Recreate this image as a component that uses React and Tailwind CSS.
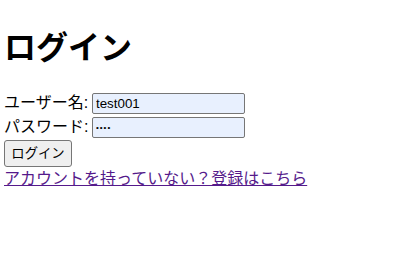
import React from 'react';

const App = () => {
  return (
    <div className="min-h-[280px] bg-white px-1 text-black font-['Liberation_Sans','Noto_Sans_CJK_JP',sans-serif]">
      <h1 className="pt-[30px] pb-[24px] text-[32px] leading-[37px] font-bold">ログイン</h1>

      <form className="flex flex-col items-start" onSubmit={(e) => e.preventDefault()}>
        <div className="flex items-center h-[24px]">
          <label className="w-[88px] text-[16px] leading-[24px] whitespace-nowrap">ユーザー名:</label>
          <input
            type="text"
            defaultValue="test001"
            className="w-[153px] h-[21px] px-[3px] border border-[#767676] rounded-[2px] bg-[#e8f0fe] text-[13.33px] outline-none"
          />
        </div>
        <div className="flex items-center h-[24px]">
          <label className="w-[88px] text-[16px] leading-[24px] whitespace-nowrap">パスワード:</label>
          <input
            type="password"
            defaultValue="test"
            className="w-[153px] h-[21px] px-[3px] border border-[#767676] rounded-[2px] bg-[#e8f0fe] text-[8px] tracking-[1px] outline-none"
          />
        </div>
        <button
          type="submit"
          className="mt-[1px] h-[27px] w-[68px] border border-[#767676] rounded-[3px] bg-[#efefef] text-[13.33px] leading-none"
        >
          ログイン
        </button>
      </form>

      <a href="#" className="block pt-[1px] text-[16px] leading-[22px] text-[#551a8b] underline">
        アカウントを持っていない？登録はこちら
      </a>
    </div>
  );
};

export default App;
